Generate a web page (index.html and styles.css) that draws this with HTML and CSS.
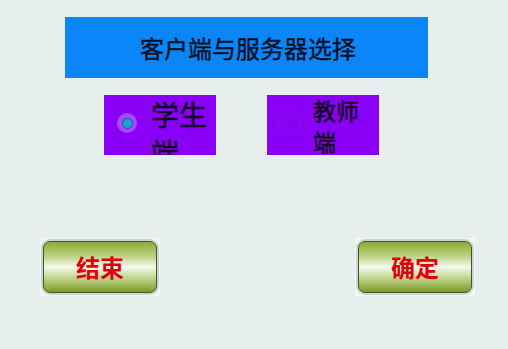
FILE: index.html
```html
<!DOCTYPE html>
<html lang="zh">

<head>
    <meta charset="UTF-8">
    <link rel="stylesheet" href="styles.css">
</head>

<body>
    <div class="title-bar">客户端与服务器选择</div>

    <div class="options">
        <div class="option student">
            <span class="radio checked"><span class="dot"></span></span>
            <span class="label">学生端</span>
        </div>
        <div class="option teacher">
            <span class="radio"></span>
            <span class="label">教师端</span>
        </div>
    </div>

    <div class="actions">
        <div class="btn-frame">
            <button class="btn">结束</button>
        </div>
        <div class="btn-frame">
            <button class="btn">确定</button>
        </div>
    </div>
</body>

</html>
```

FILE: styles.css
```css
body {
    margin: 0;
    background-color: #e7efec;
    font-family: "Noto Sans CJK SC", "Noto Sans", sans-serif;
}

/* title */
.title-bar {
    margin: 17px 0 0 65px;
    width: 363px;
    height: 61px;
    background-color: #0a86f8;
    color: #0a0f24;
    font-size: 24px;
    -webkit-text-stroke: 0.4px #0a0f24;
    display: flex;
    align-items: center;
    justify-content: center;
    padding-left: 3px;
    box-sizing: border-box;
}

/* radio choices */
.options {
    display: flex;
    gap: 51px;
    margin: 17px 0 0 104px;
}

.option {
    width: 112px;
    height: 60px;
    background-color: #8a00f6;
    display: flex;
    align-items: flex-start;
    overflow: hidden;
}

.radio {
    flex: none;
    box-sizing: border-box;
    border-radius: 50%;
}

.student .radio {
    width: 20px;
    height: 20px;
    margin: 18px 0 0 13px;
    background-color: #a24cff;
    display: flex;
    align-items: center;
    justify-content: center;
}

.student .dot {
    width: 11px;
    height: 11px;
    border-radius: 50%;
    background-color: #19a2d6;
    border: 1px solid #2a4aa0;
    box-sizing: border-box;
}

.teacher .radio {
    width: 24px;
    height: 24px;
    margin: 16px 0 0 10px;
    border: 1px solid #7a1ed0;
}

.label {
    color: #120822;
    -webkit-text-stroke: 0.5px #120822;
}

.student .label {
    width: 60px;
    font-size: 28px;
    line-height: 38px;
    margin-left: 14px;
}

.teacher .label {
    width: 50px;
    font-size: 23px;
    line-height: 31px;
    margin-left: 12px;
}

/* bottom buttons */
.actions {
    display: flex;
    justify-content: space-between;
    margin: 83px 33px 0 40px;
}

.btn-frame {
    width: 120px;
    height: 58px;
    box-sizing: border-box;
    padding: 3px;
    background-color: #f3f5f3;
}

.btn {
    width: 100%;
    height: 100%;
    border: 1px solid #3f5a16;
    border-radius: 7px;
    box-shadow: 0 0 0 2px #c7d6da;
    background: linear-gradient(to bottom, #8aab34 0%, #bcd184 28%, #f6f8ee 50%, #bcd184 74%, #7a9a28 100%);
    color: #e0000c;
    font-family: "Noto Sans CJK SC", sans-serif;
    font-size: 24px;
    font-weight: bold;
    padding: 0 0 2px 0;
}
```
